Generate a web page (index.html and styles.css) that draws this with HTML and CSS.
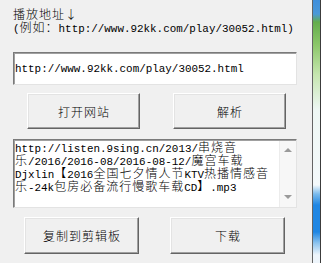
FILE: index.html
```html
<!DOCTYPE html>
<html lang="zh-CN">
<head>
    <meta charset="UTF-8">
    <title>播放地址解析</title>
    <link rel="stylesheet" href="styles.css">
</head>
<body>
    <div class="win">
        <!-- Hint -->
        <div class="hint">
            <div>播放地址↓</div>
            <div><span class="en">(</span>例如：<span class="en">http://www.92kk.com/play/30052.html)</span></div>
        </div>

        <!-- Page address -->
        <div class="field"><span class="en">http://www.92kk.com/play/30052.html</span></div>

        <div class="btn-row top-row">
            <button type="button" class="btn">打开网站</button>
            <button type="button" class="btn">解析</button>
        </div>

        <!-- Result -->
        <div class="memo">
            <div class="memo-text">
                <div class="line">http://listen.9sing.cn/2013/<span class="cn">串烧音</span></div>
                <div class="line"><span class="cn">乐</span>/2016/2016-08/2016-08-12/<span class="cn">魔宫车载</span></div>
                <div class="line">Djxlin<span class="cn">【</span>2016<span class="cn">全国七夕情人节</span>KTV<span class="cn">热播情感音</span></div>
                <div class="line"><span class="cn">乐</span>-24k<span class="cn">包房必备流行慢歌车载</span>CD<span class="cn">】</span>.mp3</div>
            </div>
            <div class="scroll">
                <span class="arrow up"></span>
                <span class="arrow down"></span>
            </div>
        </div>

        <div class="btn-row bottom-row">
            <button type="button" class="btn">复制到剪辑板</button>
            <button type="button" class="btn">下载</button>
        </div>
    </div>
    <div class="desk"></div>
    <div class="edge"></div>
</body>
</html>
```

FILE: styles.css
```css
body {
    margin: 0;
    width: 322px;
    height: 263px;
    display: flex;
    overflow: hidden;
    font-family: "Noto Sans CJK SC", sans-serif;
    font-size: 12px;
    font-weight: 300;
    letter-spacing: 1px;
    color: #000;
}
.win {
    width: 313px;
    padding: 7px 15px 0 13px;
    box-sizing: border-box;
    background: #f0f0f0;
    border-right: 1px solid #646464;
}
.desk {
    width: 7px;
    background: linear-gradient(#3f8fdc 0px, #4a98d8 14px, #63ad4c 22px, #8cc76a 45px, #c6e6b0 75px, #eef7f4 110px, #f4f9fb 185px, #7bbbec 194px, #1f86e3 205px, #1f86e3 232px, #8cc3ee 243px, #eef5fb 255px);
}
.edge {
    width: 1px;
    background: #3c3c3c;
}

/* latin text is half width, like the old bitmap font */
.en {
    font-family: "Liberation Mono", monospace;
    font-size: 10.9px;
    font-weight: 400;
    letter-spacing: 0;
}
.cn {
    font-family: "Noto Sans CJK SC", sans-serif;
    font-size: 12px;
    font-weight: 300;
    letter-spacing: 1px;
}

.hint {
    line-height: 13px;
}
.hint div {
    height: 13px;
    white-space: nowrap;
}

.field {
    margin-top: 19px;
    height: 33px;
    display: flex;
    align-items: center;
    padding-left: 1px;
    box-sizing: border-box;
    background: #fff;
    border: 1px solid;
    border-color: #7a7a7a #e3e3e3 #e3e3e3 #7a7a7a;
    box-shadow: inset 1px 1px 0 #a0a0a0;
}

.btn-row {
    display: flex;
}
.top-row {
    margin-top: 8px;
    padding-left: 14px;
    gap: 33px;
}
.bottom-row {
    margin-top: 9px;
    padding-left: 11px;
    gap: 31px;
}
.btn {
    width: 113px;
    height: 36px;
    padding: 0 0 0 1px;
    font-family: "Noto Sans CJK SC", sans-serif;
    font-size: 12px;
    font-weight: 300;
    letter-spacing: 1px;
    color: #000;
    background: #f0f0f0;
    border: 1px solid;
    border-color: #fff #646464 #646464 #fff;
    box-shadow: inset -1px -1px 0 #a0a0a0, inset 1px 1px 0 #e3e3e3;
}
.bottom-row .btn {
    width: 115px;
    height: 37px;
}

.memo {
    margin-top: 10px;
    height: 69px;
    display: flex;
    box-sizing: border-box;
    background: #fff;
    border: 1px solid;
    border-color: #7a7a7a #e3e3e3 #e3e3e3 #7a7a7a;
    box-shadow: inset 1px 1px 0 #a0a0a0;
}
.memo-text {
    flex: 1;
    padding: 0 0 0 1px;
    font-family: "Liberation Mono", monospace;
    font-size: 10.9px;
    font-weight: 400;
    letter-spacing: 0;
}
.line {
    height: 13px;
    line-height: 13px;
    white-space: nowrap;
}
.line .cn {
    line-height: 13px;
}
.scroll {
    width: 17px;
    margin: 1px 0 0;
    background: #f7f7f7;
    border-left: 1px solid #ececec;
    display: flex;
    flex-direction: column;
    justify-content: space-between;
    align-items: center;
    padding: 7px 0 8px;
    box-sizing: border-box;
}
.arrow {
    width: 0;
    height: 0;
    border-left: 4px solid transparent;
    border-right: 4px solid transparent;
}
.arrow.up {
    border-bottom: 4px solid #9a9a9a;
}
.arrow.down {
    border-top: 4px solid #9a9a9a;
}
```
